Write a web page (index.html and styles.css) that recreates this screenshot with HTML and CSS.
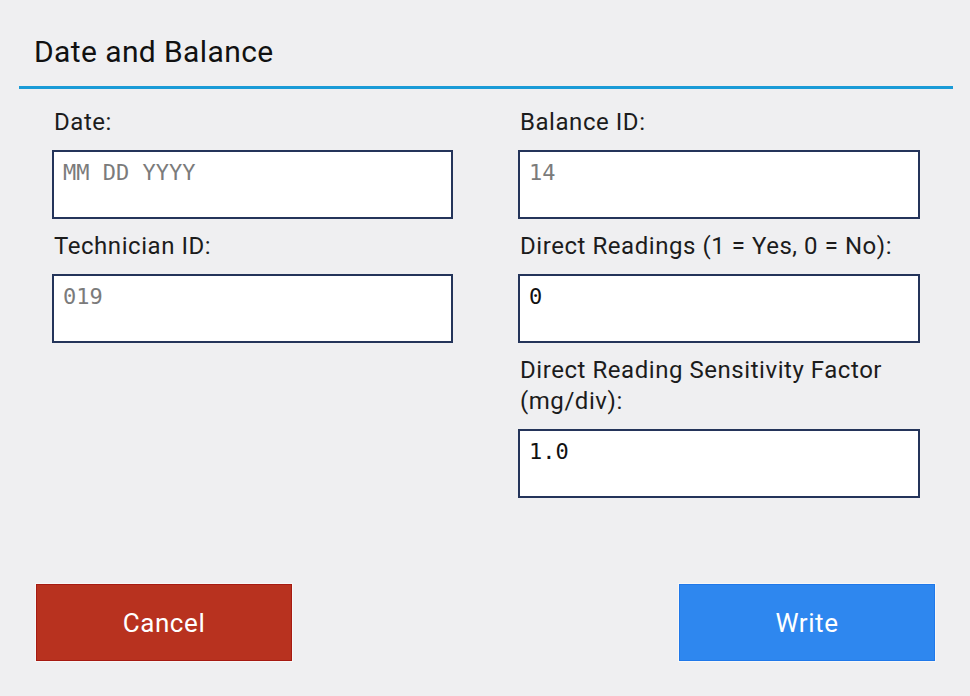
FILE: index.html
```html
<!DOCTYPE html>
<html>
<head>
<meta charset="utf-8">
<link rel="stylesheet" href="styles.css">
</head>
<body>
<div class="page">
  <div class="header">
    <h1 class="title">Date and Balance</h1>
  </div>
  <div class="form">
    <div class="column">
      <div class="field">
        <div class="label">Date:</div>
        <div class="input placeholder">MM DD YYYY</div>
      </div>
      <div class="field">
        <div class="label">Technician ID:</div>
        <div class="input placeholder">019</div>
      </div>
    </div>
    <div class="column">
      <div class="field">
        <div class="label">Balance ID:</div>
        <div class="input placeholder">14</div>
      </div>
      <div class="field">
        <div class="label">Direct Readings (1 = Yes, 0 = No):</div>
        <div class="input">0</div>
      </div>
      <div class="field">
        <div class="label">Direct Reading Sensitivity Factor (mg/div):</div>
        <div class="input">1.0</div>
      </div>
    </div>
  </div>
  <div class="actions">
    <button class="btn btn-cancel">Cancel</button>
    <button class="btn btn-write">Write</button>
  </div>
</div>
</body>
</html>
```

FILE: styles.css
```css
html, body {
  margin: 0;
  padding: 0;
  background: #efeff1;
}

.page {
  height: 696px;
  display: flex;
  flex-direction: column;
  font-family: Roboto, "Liberation Sans", sans-serif;
  color: #1a1a1a;
}

.header {
  margin: 0 17px 0 19px;
  padding: 34px 0 17px 15px;
  border-bottom: 3px solid #1a9bd7;
}

.title {
  margin: 0;
  font-size: 30px;
  font-weight: 400;
  letter-spacing: 0.4px;
  line-height: 35px;
  color: #111;
}

.form {
  display: grid;
  grid-template-columns: 401px 402px;
  column-gap: 65px;
  margin-left: 52px;
  padding-top: 18px;
  align-items: start;
}

.column {
  display: flex;
  flex-direction: column;
  gap: 12px;
}

.field {
  display: flex;
  flex-direction: column;
  gap: 12px;
}

.label {
  font-size: 24px;
  letter-spacing: 0.55px;
  line-height: 31px;
  padding-left: 2px;
  color: #1c1c1c;
}

.input {
  box-sizing: border-box;
  height: 69px;
  background: #fff;
  border: 2px solid #24345a;
  padding: 8px 9px;
  font-family: "DejaVu Sans Mono", monospace;
  font-size: 22px;
  line-height: 26px;
  color: #111;
}

.placeholder {
  color: #7b7b7b;
}

.actions {
  margin-top: auto;
  display: flex;
  justify-content: space-between;
  padding: 0 35px 35px 36px;
}

.btn {
  box-sizing: border-box;
  width: 256px;
  height: 77px;
  font-family: Roboto, "Liberation Sans", sans-serif;
  font-size: 26px;
  letter-spacing: 0.6px;
  color: #fff;
  cursor: pointer;
  outline: 1px solid #f7f7f7;
}

.btn-cancel {
  background: #b8321f;
  border: 1px solid #a61a12;
}

.btn-write {
  background: #2e87ef;
  border: 1px solid #1f78ea;
}
```
